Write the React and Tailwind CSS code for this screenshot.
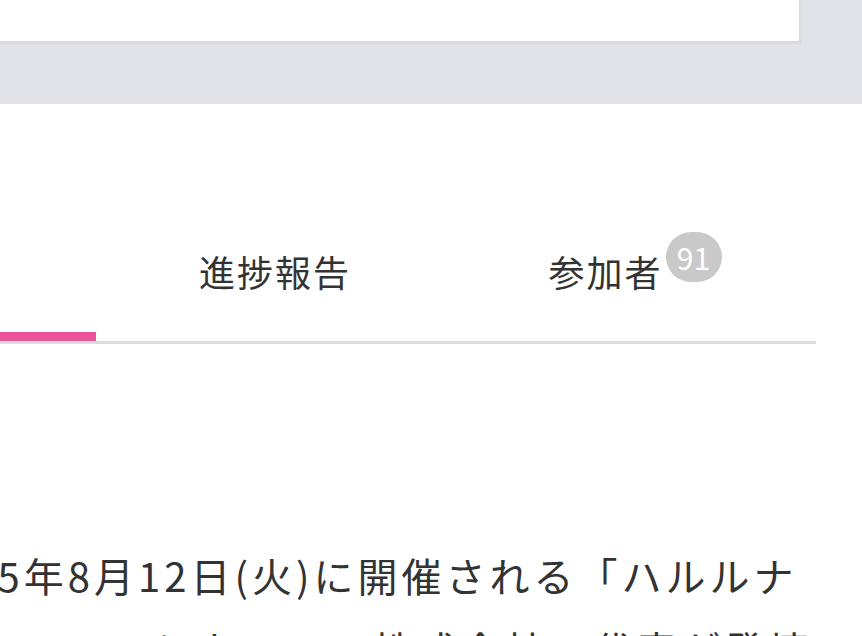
export default function App() {
  const font = { fontFamily: '"Noto Sans CJK JP", "Noto Sans", sans-serif' };
  return (
    <div className="w-[862px] h-[636px] overflow-hidden bg-white text-[#333]" style={font}>
      <div className="h-[104px] bg-[#e1e3e8] flex items-start">
        <div className="w-[801px] h-[44px] bg-white border-r-2 border-b-[3px] border-[#d9dadd]" />
      </div>

      <div className="ml-[-264px] w-[1080px] flex border-b-[3px] border-[#dcdcdc]">
        <div className="w-[360px] h-[237px] flex flex-col justify-end">
          <div className="flex-1 flex items-center justify-center text-[36px] pt-[88px]">募集概要</div>
          <div className="h-[9px] bg-[#e8539a]" />
        </div>
        <div className="w-[358px] h-[237px] flex items-center justify-center text-[36px] pt-[97px] tracking-[2px]">
          進捗報告
        </div>
        <div className="w-[362px] h-[237px] flex items-center justify-center pt-[97px]">
          <span className="text-[36px] tracking-[2px]">参加者</span>
          <span className="ml-[3px] mt-[-28px] h-[50px] min-w-[56px] px-[6px] rounded-full bg-[#c9c9c9] text-white text-[30px] leading-none flex items-center justify-center">
            91
          </span>
        </div>
      </div>

      <p className="ml-[-81px] w-[900px] mt-[194px] text-[40px] leading-[74px] tracking-[4px]">
        2025年8月12日(火)に開催される「ハルルナイト2025」において、株式会社の代表が登壇いたします。
      </p>
    </div>
  );
}
